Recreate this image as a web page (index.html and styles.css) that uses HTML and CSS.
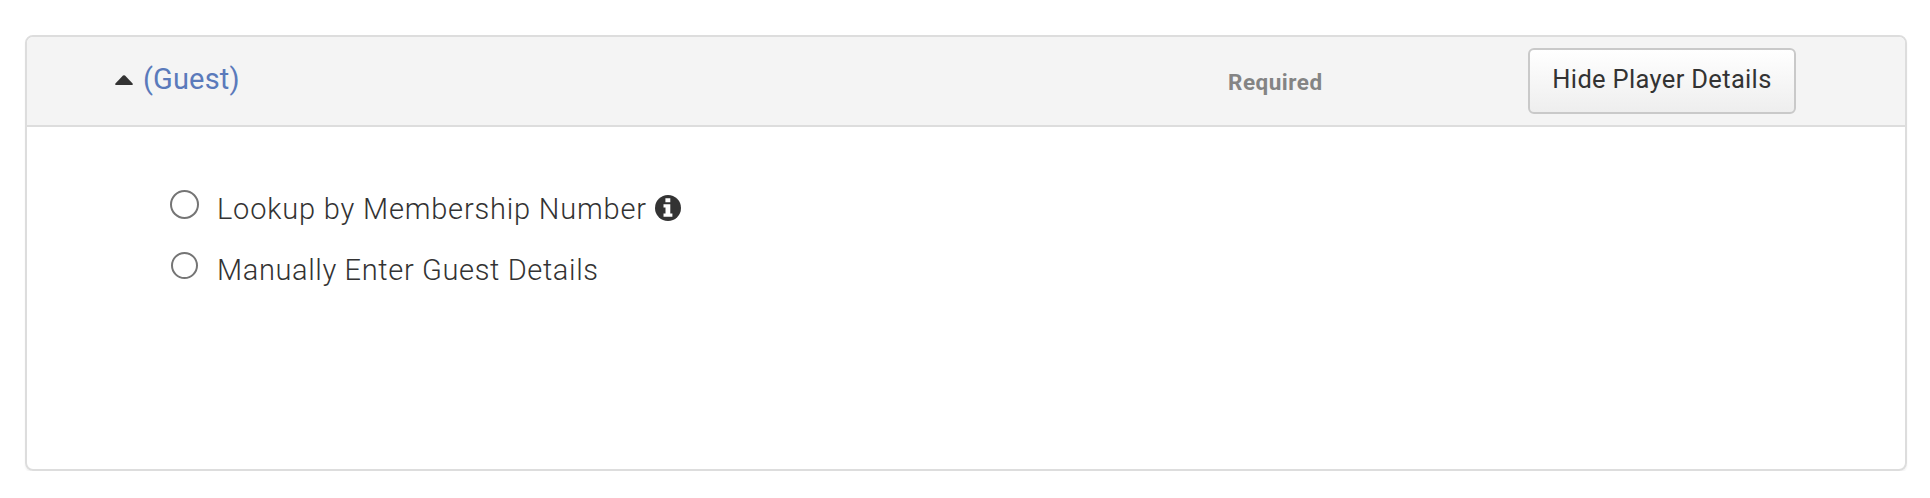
FILE: index.html
```
<!DOCTYPE html>
<html lang="en">

<head>
    <meta charset="UTF-8">
    <meta name="viewport" content="width=device-width, initial-scale=1.0">
    <title>Player Details</title>
    <link rel="stylesheet" href="styles.css">
</head>

<body>

    <div class="panel">
        <div class="panel-heading">
            <a class="player" href="#">
                <svg class="caret" width="18" height="10" viewBox="0 0 18 10">
                    <path d="M8 .6Q9 -.3 10 .6L17.6 8.4Q18.3 9.8 17 10H1Q-.3 9.8 .4 8.4Z" fill="#333" />
                </svg>
                <span class="player-name">(Guest)</span>
            </a>
            <span class="status">Required</span>
            <button class="btn" type="button">Hide Player Details</button>
        </div>
        <div class="panel-body">
            <label class="option">
                <input class="radio radio-lg" type="radio" name="lookup">
                <span class="option-text lookup">Lookup by Membership Number</span>
                <svg class="info" width="26" height="26" viewBox="0 0 26 26">
                    <circle cx="13" cy="13" r="13" fill="#333" />
                    <path d="M10.4 3.3h4.9v4h-4.9zM8.5 9.2h6.8v9.3h2.1v3.3H8.5v-3.3h2v-6h-2z" fill="#fff" />
                </svg>
            </label>
            <label class="option">
                <input class="radio" type="radio" name="lookup">
                <span class="option-text manual">Manually Enter Guest Details</span>
            </label>
        </div>
    </div>

</body>

</html>
```

FILE: styles.css
```
* {
    box-sizing: border-box;
}

html,
body {
    margin: 0;
    padding: 0;
}

body {
    background: #fff;
    color: #333;
    font-family: Roboto, "Liberation Sans", sans-serif;
}

.panel {
    width: 1882px;
    height: 436px;
    margin: 35px 0 0 25px;
    border: 2px solid #ddd;
    border-radius: 8px;
    box-shadow: 0 2px 2px rgba(0, 0, 0, 0.05);
    overflow: hidden;
}

.panel-heading {
    display: flex;
    height: 90px;
    padding-left: 88px;
    background: #f4f4f4;
    border-bottom: 2px solid #ddd;
}

.player {
    display: flex;
    align-items: flex-start;
    width: 1113px;
    color: #5a7abb;
    text-decoration: none;
}

.caret {
    margin: 38px 10px 0 0;
}

.player-name {
    margin-top: 24px;
    font-size: 29px;
    letter-spacing: 0.15px;
    line-height: 36px;
}

.status {
    width: 300px;
    margin-top: 30px;
    color: #848484;
    font-size: 22.5px;
    font-weight: 700;
    letter-spacing: 0.5px;
    line-height: 30px;
}

.btn {
    width: 268px;
    height: 66px;
    margin-top: 11px;
    padding: 0 0 4px;
    background: linear-gradient(#fff, #eee);
    border: 2px solid #c9c9c9;
    border-radius: 6px;
    color: #333;
    font-family: inherit;
    font-size: 25.5px;
    letter-spacing: 0.33px;
    white-space: nowrap;
}

.panel-body {
    padding: 62px 0 0 143px;
}

.option {
    display: flex;
    align-items: flex-start;
    height: 61px;
}

.radio {
    appearance: none;
    width: 27px;
    height: 27px;
    margin: 2px 19px 0 1px;
    border: 2px solid #757575;
    border-radius: 50%;
    background: #fff;
}

.radio-lg {
    width: 29px;
    height: 29px;
    margin: 1px 18px 0 0;
}

.option-text {
    margin-top: 2px;
    font-size: 29px;
    font-weight: 300;
    line-height: 36px;
    white-space: nowrap;
}

.lookup {
    letter-spacing: 0.81px;
}

.manual {
    letter-spacing: 0.63px;
}

.info {
    margin: 6px 0 0 8px;
}
```
